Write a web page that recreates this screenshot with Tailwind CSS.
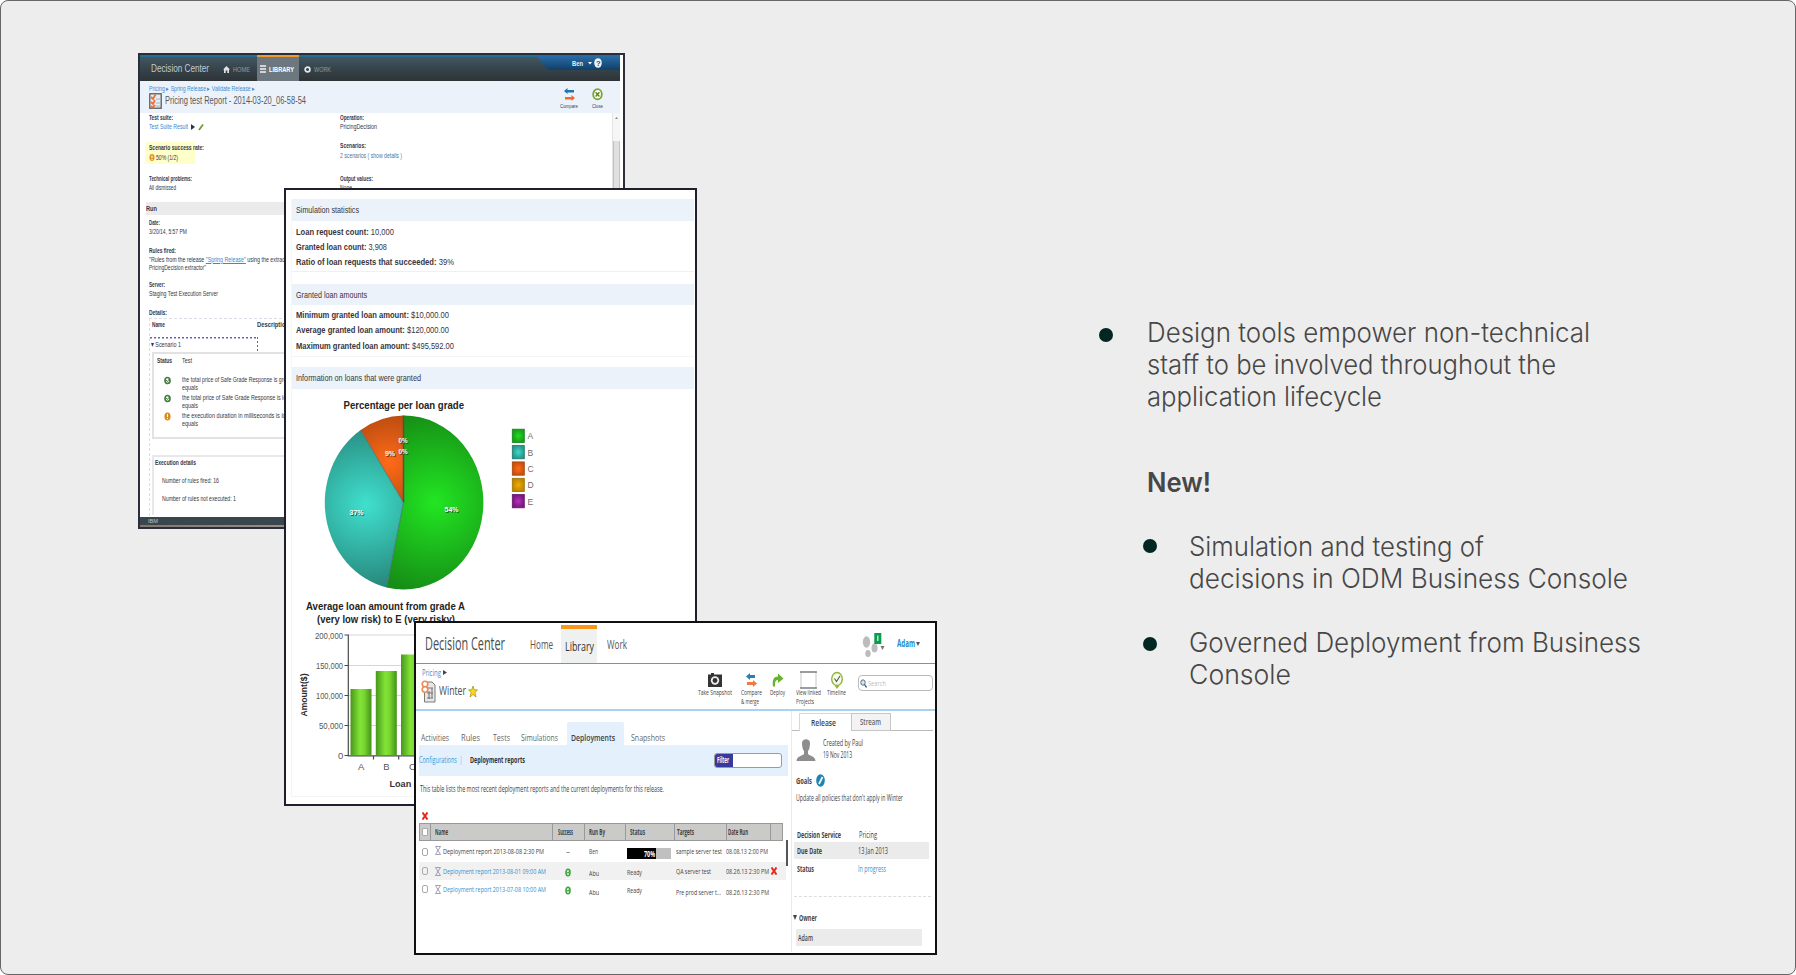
<!DOCTYPE html>
<html lang="en">
<head>
<meta charset="utf-8">
<title>Decision Center overview</title>
<script src="https://cdn.jsdelivr.net/npm/@tailwindcss/browser@4"></script>
</head>
<body class="bg-white leading-none [&_[data-w]]:inline-block [&_[data-w]]:shrink-0 [&_[data-w]]:origin-left [&_[data-w]]:whitespace-nowrap [&_svg]:shrink-0">
<main class="relative h-[975px] w-[1796px] overflow-hidden rounded-[8px] border border-[#666] bg-[#ededed]">

<!-- Test report window -->
<section class="absolute left-[137px] top-[52px] h-[476px] w-[487px] overflow-hidden border-2 border-[#2b2d3a] bg-white font-['Liberation_Sans',sans-serif] text-[7.5px] text-[#333848]">
  <header class="flex h-[26px] w-[480px] border-t-2 border-[#1f7095] bg-linear-to-b from-[#43565f] via-[#35444c] to-[#2e3336] text-[#d5dadd]">
    <div class="flex w-[117px] items-center pl-[11px] text-[10px] text-[#c3cacd]"><span data-w="58">Decision Center</span>
      <svg class="ml-[14px]" width="7" height="7" viewBox="0 0 7 7"><path d="M0 3.6 3.5 0 7 3.6H6V7H4.3V4.6H2.7V7H1V3.6Z" fill="#dde2e4"/></svg>
      <span class="ml-[3px] text-[7px] text-[#929aa5]" data-w="17">HOME</span></div>
    <div class="-mt-[2px] flex h-[26px] w-[42px] items-center border-t-2 border-[#ee9a2e] bg-[#6d7780] pl-[3px] text-[7px] font-bold text-white">
      <svg width="6" height="8" viewBox="0 0 6 8"><path d="M0 1H6M0 4H6M0 7H6" stroke="#f4f4f4" stroke-width="1.3"/></svg>
      <span class="ml-[3px]" data-w="25">LIBRARY</span></div>
    <div class="flex w-[227px] items-center pl-[5px] text-[7px] text-[#8f999e]">
      <svg width="7" height="7" viewBox="0 0 7 7"><circle cx="3.5" cy="3.5" r="2.4" fill="none" stroke="#e4e7e8" stroke-width="1.7"/></svg>
      <span class="ml-[3px]" data-w="17">WORK</span></div>
    <svg class="ml-auto -mt-[1px]" width="84" height="15" viewBox="0 0 84 15"><defs><linearGradient id="ban" x2="0" y2="1"><stop stop-color="#2a6ca6"/><stop offset="1" stop-color="#103f68"/></linearGradient></defs><path d="M0 0H84V14H14Q9 12 6 7T0 0Z" fill="url(#ban)"/><text x="36" y="10" font-size="8" font-weight="bold" fill="#e8f0f8" textLength="11" lengthAdjust="spacingAndGlyphs">Ben</text><path d="M52 6h4l-2 2.5z" fill="#fff"/><ellipse cx="62" cy="7" rx="3.8" ry="4.8" fill="#eef3f7"/><text x="60" y="10" font-size="7.5" font-weight="bold" fill="#224c70">?</text></svg>
  </header>

  <div class="flex h-[32px] w-[480px] justify-between bg-[#ecf2fa] pl-[9px]">
    <div class="pt-[3px]">
      <div class="flex h-[8px] items-center text-[7px] text-[#4289cf]"><span data-w="106">Pricing ▸ Spring Release ▸ Validate Release ▸</span></div>
      <div class="flex h-[18px] items-center text-[10px] text-[#555a61]">
        <svg width="13" height="16" viewBox="0 0 13 16"><rect x=".8" y=".8" width="11.4" height="14.4" fill="#e5eef5" stroke="#545a60" stroke-width="1.3"/><path d="M2 4 4 6 6.5 1.5M2 9 4 11 6 7M2 13 4 14.5 6 12" fill="none" stroke="#ee7038" stroke-width="1.8"/><path d="M7 6h4M7 10h4M7 13h4" stroke="#a0b6c4"/></svg>
        <span class="ml-[3px]" data-w="141">Pricing test Report - 2014-03-20_06-58-54</span></div>
    </div>
    <div class="mr-[17px] flex gap-[14px] pt-[7px] text-[6px] text-[#3a4258]">
      <div class="flex flex-col items-center gap-[2px]"><svg width="11" height="13" viewBox="0 0 11 13"><path d="M0 3 3.500 0V2H10V4.500H3.500V6Z" fill="#1d78ab"/><path d="M11 10 7.500 7V9H1V11.500H7.500V13Z" fill="#ee6a35"/></svg><span data-w="18">Compare</span></div>
      <div class="flex flex-col items-center gap-[2px]"><svg width="11" height="13" viewBox="0 0 11 13"><ellipse cx="5.500" cy="6.200" rx="4.300" ry="5.100" fill="#fff" stroke="#7ba234" stroke-width="1.800"/><path d="M3.600 4.200 7.400 8.400M7.400 4.200 3.600 8.400" stroke="#5a8b24" stroke-width="1.500"/></svg><span data-w="11">Close</span></div>
    </div>
  </div>

  <div class="flex h-[404px] w-[480px]">
    <div class="w-[472px]">
      <div class="grid grid-cols-[195px_277px]">
        <div class="pl-[5px]">
          <div class="flex h-[10px] items-center pl-[4px] font-bold"><span data-w="24">Test suite:</span></div>
          <div class="flex h-[8px] items-center pl-[4px] text-[#3f86cc]"><span data-w="39">Test Suite Result</span><svg class="ml-[2px]" width="15" height="8" viewBox="0 0 15 8"><path d="M1 1 5 4 1 7z" fill="#26384d"/><path d="M9 7 13 1.500" stroke="#6c9e38" stroke-width="1.800"/></svg></div>
          <div class="mt-[11px] h-[22px] w-[50px] bg-[#ffffc9] pl-[4px]">
            <div class="flex h-[11px] items-center font-bold"><span data-w="55">Scenario success rate:</span></div>
            <div class="flex h-[9px] items-center"><svg width="6" height="7" viewBox="0 0 6 7"><ellipse cx="3" cy="3.500" rx="2.600" ry="3.400" fill="#dd962b"/><path d="M3 1.500V4M3 5V6" stroke="#fff"/></svg><span class="ml-[1px]" data-w="22">50% (1/2)</span></div>
          </div>
          <div class="mt-[10px] flex h-[9px] items-center pl-[4px] font-bold"><span data-w="43">Technical problems:</span></div>
          <div class="flex h-[9px] items-center pl-[4px]"><span data-w="27">All dismissed</span></div>
        </div>
        <div class="pl-[5px]">
          <div class="flex h-[10px] items-center font-bold"><span data-w="24">Operation:</span></div>
          <div class="flex h-[8px] items-center"><span data-w="37">PricingDecision</span></div>
          <div class="mt-[10px] flex h-[10px] items-center font-bold"><span data-w="26">Scenarios:</span></div>
          <div class="flex h-[9px] items-center text-[#4678a8]"><span data-w="62">2 scenarios ( show details )</span></div>
          <div class="mt-[14px] flex h-[9px] items-center font-bold"><span data-w="33">Output values:</span></div>
          <div class="flex h-[9px] items-center"><span data-w="12">None</span></div>
        </div>
      </div>
      <div class="ml-[6px] mt-[10px] flex h-[13px] items-center bg-[#ebebeb] font-bold"><span data-w="11">Run</span></div>
      <div class="pl-[9px]">
        <div class="mt-[3px] flex h-[10px] items-center font-bold"><span data-w="11">Date:</span></div>
        <div class="flex h-[8px] items-center"><span data-w="38">3/20/14, 5:57 PM</span></div>
        <div class="mt-[10px] flex h-[9px] items-center font-bold"><span data-w="27">Rules fired:</span></div>
        <div class="flex h-[9px] items-center"><span data-w="142">"Rules from the release <u class="text-[#3f86cc]">"Spring Release"</u> using the extractor</span></div>
        <div class="flex h-[7px] items-center"><span data-w="57">PricingDecision extractor"</span></div>
        <div class="mt-[9px] flex h-[10px] items-center font-bold"><span data-w="16">Server:</span></div>
        <div class="flex h-[8px] items-center"><span data-w="69">Staging Test Execution Server</span></div>
        <div class="mt-[10px] flex h-[10px] items-center font-bold"><span data-w="18">Details:</span></div>
        <div class="h-[198px] border-l border-t border-dashed border-[#dcdce8]">
          <div class="flex h-[12px] items-center font-bold"><span class="ml-[2px]" data-w="13">Name</span><span class="ml-[92px]" data-w="32">Description</span></div>
          <div class="mt-[6px] flex h-[15px] w-[108px] items-center pl-[1px] [background-image:repeating-linear-gradient(90deg,#655bc4_0_2px,#fff0_2px_4px),repeating-linear-gradient(#655bc4_0_2px,#fff0_2px_4px)] [background-position:0_0,100%_0] [background-repeat:no-repeat] [background-size:100%_1.5px,1.5px_100%]"><span data-w="30">▾ Scenario 1</span></div>
          <div class="ml-[2px] h-[87px] border-2 border-r-0 border-[#e2e2e2] pl-[3px]">
            <div class="flex h-[14px] items-center"><span class="font-bold" data-w="15">Status</span><span class="ml-[10px]" data-w="10">Test</span></div>
            <div class="mt-[8px] flex h-[18px] gap-[11px] pl-[7px]"><svg width="7" height="9" viewBox="0 0 7 9"><ellipse cx="3.500" cy="4.500" rx="2.500" ry="3" fill="#fff" stroke="#487b42" stroke-width="1.700"/><path d="M2 4 3.500 5.500 6 2" fill="none" stroke="#487b42"/></svg><div class="flex flex-col"><span data-w="125">the total price of Safe Grade Response is greater than</span><span data-w="16">equals</span></div></div>
            <div class="flex h-[18px] gap-[11px] pl-[7px]"><svg width="7" height="9" viewBox="0 0 7 9"><ellipse cx="3.500" cy="4.500" rx="2.500" ry="3" fill="#fff" stroke="#487b42" stroke-width="1.700"/><path d="M2 4 3.500 5.500 6 2" fill="none" stroke="#487b42"/></svg><div class="flex flex-col"><span data-w="125">the total price of Safe Grade Response is lower than</span><span data-w="16">equals</span></div></div>
            <div class="flex h-[18px] gap-[11px] pl-[7px]"><svg width="7" height="9" viewBox="0 0 7 9"><ellipse cx="3.500" cy="4.500" rx="3.100" ry="3.900" fill="#d78c24"/><path d="M3.500 2V5M3.500 6V7" stroke="#fff"/></svg><div class="flex flex-col"><span data-w="125">the execution duration in milliseconds is lower than</span><span data-w="16">equals</span></div></div>
          </div>
          <div class="ml-[2px] mt-[16px] h-[60px] border-l-2 border-t-2 border-[#e8e8e8] pl-[1px]">
            <div class="flex h-[12px] items-center font-bold"><span data-w="41">Execution details</span></div>
            <div class="mt-[7px] flex h-[10px] items-center pl-[7px]"><span data-w="57">Number of rules fired: 16</span></div>
            <div class="mt-[8px] flex h-[10px] items-center pl-[7px]"><span data-w="74">Number of rules not executed: 1</span></div>
          </div>
        </div>
      </div>
    </div>
    <div class="w-[8px] border-l border-[#e4e4e4] bg-[#f6f6f6] pt-[3px]">
      <svg width="7" height="4" viewBox="0 0 7 4"><path d="M2 3 3.500 1 5 3z" fill="#888"/></svg>
      <div class="mt-[21px] h-[300px] border-x border-[#c2c2c2] bg-[#e0e0e0]"></div>
    </div>
  </div>
  <footer class="flex h-[8px] items-center bg-[#3a464d] pl-[8px] text-[6px] text-[#b9c3c8]"><span data-w="10">IBM</span></footer>
  <div class="h-[3px] bg-linear-to-r from-[#817770] to-[#c6c8c9]"></div>
</section>

<!-- Simulation report window -->
<section class="absolute left-[283px] top-[187px] h-[618px] w-[413px] overflow-hidden border-2 border-[#1e1f2f] bg-white font-['Liberation_Sans',sans-serif] text-[9.5px] text-[#38343d]">
  <div class="ml-[5px] mt-[9px] w-[403px] border-l border-[#f5f7fa]">
    <div class="flex h-[22px] items-center bg-[#ecf2f9] pl-[4px]"><span data-w="63">Simulation statistics</span></div>
    <div class="h-[51px] border-b border-[#ecf1f5] pl-[4px] pt-[3px]">
      <div class="flex h-[15px] items-center"><span data-w="98"><b>Loan request count:</b> 10,000</span></div>
      <div class="flex h-[15px] items-center"><span data-w="91"><b>Granted loan count:</b> 3,908</span></div>
      <div class="flex h-[15px] items-center"><span data-w="158"><b>Ratio of loan requests that succeeded:</b> 39%</span></div>
    </div>
    <div class="mt-[12px] flex h-[21px] items-center bg-[#ecf2f9] pl-[4px]"><span data-w="71">Granted loan amounts</span></div>
    <div class="h-[52px] border-b border-[#f2f5f8] pl-[4px] pt-[2px]">
      <div class="flex h-[15px] items-center"><span data-w="153"><b>Minimum granted loan amount:</b> $10,000.00</span></div>
      <div class="flex h-[16px] items-center"><span data-w="153"><b>Average granted loan amount:</b> $120,000.00</span></div>
      <div class="flex h-[15px] items-center"><span data-w="158"><b>Maximum granted loan amount:</b> $495,592.00</span></div>
    </div>
    <div class="mt-[10px] flex h-[22px] items-center bg-[#ecf2f9] pl-[4px]"><span data-w="125">Information on loans that were granted</span></div>
  </div>
  <!-- Charts: viewBox starts at the lower edge of the last section bar -->
  <svg width="409" height="415" viewBox="286 389.500 409 415" font-family="Liberation Sans, sans-serif">
    <defs>
      <radialGradient id="ga" gradientUnits="userSpaceOnUse" cx="435" cy="503" r="92"><stop stop-color="#22e622"/><stop offset="1" stop-color="#168d16"/></radialGradient>
      <radialGradient id="gb" gradientUnits="userSpaceOnUse" cx="366" cy="505" r="88"><stop stop-color="#40e0ce"/><stop offset="1" stop-color="#268378"/></radialGradient>
      <radialGradient id="gc" gradientUnits="userSpaceOnUse" cx="389" cy="463" r="52"><stop stop-color="#ff6a18"/><stop offset="1" stop-color="#b64a10"/></radialGradient>
      <linearGradient id="bar"><stop stop-color="#48961c"/><stop offset=".45" stop-color="#83e436"/><stop offset=".65" stop-color="#78d730"/><stop offset="1" stop-color="#45901b"/></linearGradient>
      <radialGradient id="l1"><stop stop-color="#25dc25"/><stop offset="1" stop-color="#179f17"/></radialGradient>
      <radialGradient id="l2"><stop stop-color="#3fd9c8"/><stop offset="1" stop-color="#27988c"/></radialGradient>
      <radialGradient id="l3"><stop stop-color="#ff6c18"/><stop offset="1" stop-color="#c7500e"/></radialGradient>
      <radialGradient id="l4"><stop stop-color="#f3ac00"/><stop offset="1" stop-color="#be8600"/></radialGradient>
      <radialGradient id="l5"><stop stop-color="#b92fc0"/><stop offset="1" stop-color="#77197d"/></radialGradient>
    </defs>
    <path d="M291.500 389V797H694" fill="none" stroke="#f4f4f4"/>
    <g font-size="11.500" font-weight="bold" fill="#242424">
      <text x="343.500" y="409.500" textLength="120.500" lengthAdjust="spacingAndGlyphs">Percentage per loan grade</text>
      <text x="306" y="610" textLength="159" lengthAdjust="spacingAndGlyphs">Average loan amount from grade A</text>
      <text x="317" y="623" textLength="138" lengthAdjust="spacingAndGlyphs">(very low risk) to E (very risky)</text>
    </g>
    <path d="M403.500 503V416A79.700 87 0 1 1 386.700 588Z" fill="url(#ga)"/>
    <path d="M403.500 503 386.700 588A79.700 87 0 0 1 360.700 430.500Z" fill="url(#gb)"/>
    <path d="M403.500 503 360.700 430.500A79.700 87 0 0 1 403.500 416Z" fill="url(#gc)"/>
    <path d="M360.700 430.500 403.500 503 386.700 588" fill="none" stroke="#45645c" stroke-width=".7"/><path d="M403.500 416V503" stroke="#485a38" stroke-width="1.500"/>
    <g font-size="8" font-weight="bold">
      <g fill="#222" opacity=".7"><text x="445.500" y="513" textLength="14" lengthAdjust="spacingAndGlyphs">54%</text><text x="350.500" y="516" textLength="14" lengthAdjust="spacingAndGlyphs">37%</text><text x="386" y="457" textLength="10" lengthAdjust="spacingAndGlyphs">9%</text><text x="399.500" y="444" textLength="9" lengthAdjust="spacingAndGlyphs">0%</text><text x="399.500" y="455.500" textLength="9" lengthAdjust="spacingAndGlyphs">0%</text></g>
      <g fill="#fff"><text x="444.500" y="512" textLength="14" lengthAdjust="spacingAndGlyphs">54%</text><text x="349.500" y="515" textLength="14" lengthAdjust="spacingAndGlyphs">37%</text><text x="385" y="456" textLength="10" lengthAdjust="spacingAndGlyphs">9%</text><text x="398.500" y="443" textLength="9" lengthAdjust="spacingAndGlyphs">0%</text><text x="398.500" y="454.500" textLength="9" lengthAdjust="spacingAndGlyphs">0%</text></g>
    </g>
    <g stroke-width=".8"><rect x="512.300" y="429.700" width="12" height="13.300" fill="url(#l1)" stroke="#178317"/><rect x="512.300" y="446" width="12" height="13.300" fill="url(#l2)" stroke="#1f756c"/><rect x="512.300" y="462.400" width="12" height="13.300" fill="url(#l3)" stroke="#a7430b"/><rect x="512.300" y="478.800" width="12" height="13.300" fill="url(#l4)" stroke="#9c7208"/><rect x="512.300" y="495" width="12" height="13.300" fill="url(#l5)" stroke="#651769"/></g>
    <g font-size="8.500" fill="#6d6d6d"><text x="527.500" y="439.500">A</text><text x="527.500" y="456">B</text><text x="527.500" y="472.300">C</text><text x="527.500" y="488.600">D</text><text x="527.500" y="505">E</text></g>
    <path d="M348 635.500H415M348 666H415M348 696H415M348 726H415" stroke="#d6d6d6"/>
    <rect x="350.500" y="689.500" width="21" height="66" fill="url(#bar)"/><rect x="375.800" y="671.500" width="21" height="84" fill="url(#bar)"/><rect x="401" y="655" width="21" height="100.500" fill="url(#bar)"/>
    <path d="M348.300 635V756.300H416M344.500 635.500H348M344.500 666H348M344.500 696H348M344.500 726H348M344.500 756H348M373.500 756V760M398.700 756V760" fill="none" stroke="#4a4a4a" stroke-width="1.200"/>
    <g font-size="9.500" fill="#555"><text x="315" y="639" textLength="28" lengthAdjust="spacingAndGlyphs">200,000</text><text x="316" y="669.300" textLength="27" lengthAdjust="spacingAndGlyphs">150,000</text><text x="316" y="699.300" textLength="27" lengthAdjust="spacingAndGlyphs">100,000</text><text x="319" y="729.300" textLength="24" lengthAdjust="spacingAndGlyphs">50,000</text><text x="338" y="759.500">0</text><text x="358" y="770.500">A</text><text x="383.300" y="770.500">B</text><text x="409" y="770.500">C</text></g>
    <text x="389.500" y="787" font-size="9.500" font-weight="bold" fill="#333" textLength="49" lengthAdjust="spacingAndGlyphs">Loan grade</text>
    <text transform="translate(306.500 717)rotate(-90)" font-size="9.500" font-weight="bold" fill="#2b2b2b" textLength="43" lengthAdjust="spacingAndGlyphs">Amount($)</text>
  </svg>
</section>

<!-- Release window -->
<section class="absolute left-[413px] top-[620px] h-[334px] w-[523px] overflow-hidden border-2 border-[#101010] bg-white font-['Open_Sans',sans-serif] text-[9px] text-[#444]">
  <header class="flex h-[41px] items-center border-b border-[#8e8e8e] pl-[9px] text-[13px] text-[#555]">
    <span class="text-[18px] text-[#4b4b4b]" data-w="80">Decision Center</span>
    <span class="ml-[25px] mt-[3px]" data-w="23">Home</span>
    <div class="ml-[8px] flex h-[38px] w-[36px] items-center self-end border-t-4 border-[#f7981d] bg-[#eff0f0] pl-[4px] text-[#333]"><span data-w="29">Library</span></div>
    <span class="ml-[10px] mt-[3px]" data-w="20">Work</span>
    <svg class="ml-[235px] mt-[1px]" width="26" height="27" viewBox="0 0 26 27"><g fill="#bcbcbc"><ellipse cx="4.500" cy="12" rx="3.700" ry="5.700"/><ellipse cx="6" cy="23.500" rx="2.700" ry="3.500"/><ellipse cx="12.500" cy="18" rx="3" ry="4.500"/></g><rect x="12.300" y="3" width="7" height="11" fill="#0b9b50"/><path d="M15.800 5.500V11" stroke="#c5efd6" stroke-width="1.400"/><path d="M18.500 16h4l-2 4z" fill="#777"/></svg>
    <span class="ml-[9px] text-[10.5px] font-bold text-[#2788c6]" data-w="18">Adam</span><svg class="ml-[1px]" width="4" height="5" viewBox="0 0 4 5"><path d="M0 1h4L2 5z" fill="#555"/></svg>
  </header>

  <div class="flex h-[47px] border-b-2 border-[#a9d2ee]">
    <div class="w-[282px] pl-[5px] pt-[3px]">
      <div class="flex h-[11px] items-center pl-[1px] text-[#3593d3]"><span data-w="19">Pricing</span><svg class="ml-[2px]" width="4" height="5" viewBox="0 0 4 5"><path d="M0 0 4 2.500 0 5z" fill="#444"/></svg></div>
      <div class="flex h-[26px] items-center text-[12.5px] text-[#4b4b4b]">
        <svg width="15" height="23" viewBox="0 0 15 23"><path d="M3.500 2H11L14 5V22H3.500Z" fill="#e7e7e7" stroke="#7a7a7a"/><path d="M6 8H12M6 13H12M6 18H12M8 11V19M11 8V18" stroke="#777" stroke-width="1.100"/><circle cx="4" cy="4" r="2.800" fill="#fff" stroke="#ef8b53" stroke-width="1.600"/><circle cx="4" cy="9.500" r="2.800" fill="#fff" stroke="#ef8b53" stroke-width="1.600"/></svg>
        <span class="ml-[3px]" data-w="27">Winter</span>
        <svg class="ml-[2px]" width="10" height="13" viewBox="0 0 10 13"><path d="M5 1 6.300 4.800H9.500L7 7.500 8 12 5 9.500 2 12 3 7.500.5 4.800H3.700Z" fill="#f8d915" stroke="#a08c1c" stroke-width=".7"/></svg>
      </div>
    </div>
    <div class="flex pt-[7px] text-[7.5px] text-[#444]">
      <div class="flex w-[34px] flex-col items-center"><svg class="h-[18px]" width="16" height="16" viewBox="0 0 16 16"><path d="M1 2.500H4V1H7V2.500H15V15H1Z" fill="#343434"/><circle cx="8" cy="8.500" r="4.200" fill="#eee"/><circle cx="8" cy="8.500" r="2.400" fill="#343434"/></svg><span class="h-[9px]" data-w="34">Take Snapshot</span></div>
      <div class="ml-[9px] flex w-[21px] flex-col items-center"><svg class="h-[18px]" width="11" height="14" viewBox="0 0 11 14"><path d="M0 3.500 4 0V2H9V5H4V7Z" fill="#2980b5"/><path d="M11 10.500 7 7V9H1V12H7V14Z" fill="#f07b40"/></svg><span class="h-[9px]" data-w="21">Compare</span><span class="h-[9px]" data-w="18">&amp; merge</span></div>
      <div class="ml-[8px] flex w-[15px] flex-col items-center"><svg class="h-[18px]" width="12" height="15" viewBox="0 0 12 15"><path d="M1 14C0 7 2 4 6 4V1L11.500 6 6 10.500V7.500C3 7.500 3 10 3 14Z" fill="#67b32e"/></svg><span class="h-[9px]" data-w="15">Deploy</span></div>
      <div class="ml-[11px] flex w-[25px] flex-col items-center"><svg class="h-[18px]" width="17" height="18" viewBox="0 0 17 18"><rect x="1" y="1" width="15" height="16" fill="#fff" stroke="#bbb" stroke-width=".8"/><path d="M0 1H17M0 17H17" stroke="#555" stroke-width="1.100"/></svg><span class="h-[9px]" data-w="25">View linked</span><span class="h-[9px]" data-w="18">Projects</span></div>
      <div class="ml-[6px] flex w-[19px] flex-col items-center"><svg class="h-[18px]" width="14" height="18" viewBox="0 0 14 18"><ellipse cx="7" cy="8" rx="5.300" ry="6.500" fill="#f5fae9" stroke="#8fb640" stroke-width="1.400"/><path d="M4.500 14.500 7 18 9.500 14.500Z" fill="#8fb640"/><path d="M4.500 7.500 6.500 10.500 10 5" fill="none" stroke="#555" stroke-width="1.100"/></svg><span class="h-[9px]" data-w="19">Timeline</span></div>
      <div class="ml-[12px] mt-[4px] flex h-[16px] w-[75px] items-center rounded-[4px] border border-[#bbb] pl-[1px] text-[8px] text-[#bbb]"><svg width="7" height="9" viewBox="0 0 7 9"><ellipse cx="3" cy="3.500" rx="2.200" ry="2.700" fill="#d5e6ee" stroke="#527187"/><path d="M4.500 5.500 6.500 8.500" stroke="#34556e" stroke-width="1.300"/></svg><span class="ml-[1px]" data-w="18">Search</span></div>
    </div>
  </div>

  <div class="flex">
    <!-- Deployment list -->
    <div class="w-[375px] pl-[3px]">
      <nav class="flex h-[34px] items-end pl-[2px] text-[9.5px] text-[#666]">
        <span class="h-[12px]" data-w="28">Activities</span><span class="ml-[12px] h-[12px]" data-w="19">Rules</span><span class="ml-[13px] h-[12px]" data-w="17">Tests</span><span class="ml-[11px] h-[12px]" data-w="37">Simulations</span>
        <div class="ml-[9px] flex h-[23px] w-[57px] items-end rounded-t-[2px] bg-[#e4f0fb] pl-[4px] font-semibold text-[#3c4249]"><span class="h-[12px]" data-w="44">Deployments</span></div>
        <span class="ml-[7px] h-[12px]" data-w="34">Snapshots</span>
      </nav>
      <div class="flex h-[31px] w-[369px] items-center bg-[#e4f0fb] text-[8.5px]">
        <span class="text-[#3a98d6]" data-w="38">Configurations</span><span class="ml-[3px] text-[#3a98d6]" data-w="2">|</span><span class="ml-[8px] font-bold text-[#333]" data-w="55">Deployment reports</span>
        <div class="ml-[189px] flex h-[15px] w-[68px] overflow-hidden rounded-[3px] border border-[#9a9a9a] bg-white"><div class="flex w-[18px] items-center bg-[#363a9d] pl-[2px] font-bold text-white"><span data-w="12">Filter</span></div></div>
      </div>
      <div class="flex h-[27px] items-center pl-[1px] text-[8.5px]"><span data-w="244">This table lists the most recent deployment reports and the current deployments for this release.</span></div>
      <div class="mt-[7px] flex h-[12px] items-center pl-[3px]"><svg width="6" height="8" viewBox="0 0 6 8"><path d="M.5.5 5.500 7.500M5.500.5.500 7.500" stroke="#e7291c" stroke-width="2"/></svg></div>
      <div class="flex">
        <div class="w-[367px] text-[8px]">
          <div class="mt-px grid h-[18px] w-[364px] grid-cols-[11px_122px_32px_41px_49px_52px_44px_13px] items-center divide-x divide-[#999] border border-[#999] bg-[#cacac8] font-bold text-[#3f3f3f] [&>div]:flex [&>div]:h-full [&>div]:items-center [&>div]:pl-[4px]">
            <div class="!pl-[2px]"><div class="h-[8px] w-[6px] rounded-[1px] border border-[#aaa] bg-white"></div></div>
            <div><span data-w="13">Name</span></div><div class="!pl-[5px]"><span data-w="15">Success</span></div><div><span data-w="16">Run By</span></div><div><span data-w="15">Status</span></div><div class="!pl-[2px]"><span data-w="17">Targets</span></div><div class="!pl-px"><span data-w="20">Date Run</span></div><div></div>
          </div>
          <div class="grid h-[21px] grid-cols-[24px_109px_37px_38px_49px_50px_60px] items-center pb-[1px]">
            <div class="flex items-center gap-[7px] pl-[3px] pt-[2px]"><div class="h-[8px] w-[6px] rounded-[2px] border border-[#aaa]"></div><svg class="-mt-[4px]" width="6" height="9" viewBox="0 0 6 9"><path d="M.5.500H5.500L.5 8.500H5.500Z" fill="none" stroke="#8c88a0" stroke-width=".8"/></svg></div>
            <span data-w="101">Deployment report 2013-08-08 2:30 PM</span><span class="pl-[14px]">–</span><span data-w="9">Ben</span>
            <div class="mt-[5px] flex h-[11px] w-[44px] bg-[#c0c0c0]"><div class="flex w-[29px] items-center justify-end bg-black pr-[1px] font-bold text-white"><span data-w="11">70%</span></div></div>
            <span data-w="46">sample server test</span><span data-w="42">08.08.13 2:00 PM</span>
          </div>
          <div class="grid h-[18px] grid-cols-[24px_109px_37px_38px_49px_50px_60px] items-center bg-[#f1f1f1]">
            <div class="flex items-center gap-[7px] pl-[3px]"><div class="h-[8px] w-[6px] rounded-[2px] border border-[#aaa]"></div><svg width="6" height="9" viewBox="0 0 6 9"><path d="M.5.500H5.500L.5 8.500H5.500Z" fill="none" stroke="#8c88a0" stroke-width=".8"/></svg></div>
            <span class="text-[#3590cd]" data-w="103">Deployment report 2013-08-01 09:00 AM</span>
            <svg class="ml-[13px] mt-[3px]" width="6" height="9" viewBox="0 0 6 9"><ellipse cx="3" cy="4.500" rx="2" ry="3.300" fill="#fff" stroke="#3ba53c" stroke-width="1.600"/><path d="M2 4 3 5.500 5 2" fill="none" stroke="#3ba53c"/></svg>
            <span class="mt-[3px]" data-w="10">Abu</span><span class="mt-[2px]" data-w="15">Ready</span><span data-w="35">QA server test</span><div class="flex items-center"><span data-w="43">08.26.13 2:30 PM</span><svg class="ml-[2px]" width="6" height="8" viewBox="0 0 6 8"><path d="M.5.5 5.500 7.500M5.500.5.500 7.500" stroke="#e7291c" stroke-width="2"/></svg></div>
          </div>
          <div class="grid h-[18px] grid-cols-[24px_109px_37px_38px_49px_50px_60px] items-center">
            <div class="flex items-center gap-[7px] pl-[3px]"><div class="h-[8px] w-[6px] rounded-[2px] border border-[#aaa]"></div><svg width="6" height="9" viewBox="0 0 6 9"><path d="M.5.500H5.500L.5 8.500H5.500Z" fill="none" stroke="#8c88a0" stroke-width=".8"/></svg></div>
            <span class="text-[#3590cd]" data-w="103">Deployment report 2013-07-08 10:00 AM</span>
            <svg class="ml-[13px] mt-[3px]" width="6" height="9" viewBox="0 0 6 9"><ellipse cx="3" cy="4.500" rx="2" ry="3.300" fill="#fff" stroke="#3ba53c" stroke-width="1.600"/><path d="M2 4 3 5.500 5 2" fill="none" stroke="#3ba53c"/></svg>
            <span class="mt-[6px]" data-w="10">Abu</span><span class="mt-[2px]" data-w="15">Ready</span><span class="mt-[6px]" data-w="45">Pre prod server t...</span><span class="mt-[6px]" data-w="43">08.26.13 2:30 PM</span>
          </div>
        </div>
        <div class="mt-[18px] h-[26px] w-[2px] bg-[#555]"></div>
      </div>
    </div>

    <!-- Release details -->
    <aside class="h-[241px] w-[142px] border-l border-[#e9e9e9] pt-[2px] text-[8.5px]">
      <div class="flex h-[18px]">
        <div class="w-[7px] border-b border-[#bbb]"></div>
        <div class="flex w-[52px] items-center border-l border-t border-[#d8d8d8] pl-[11px] text-[9.5px] font-semibold"><span data-w="25">Release</span></div>
        <div class="flex w-[40px] items-center border border-[#c6c6c6] bg-[#f3f3f3] pl-[8px] text-[9.5px] font-semibold text-[#666]"><span data-w="21">Stream</span></div>
        <div class="grow border-b border-[#bbb]"></div>
      </div>
      <div class="flex pl-[4px] pt-[7px]">
        <svg width="20" height="24" viewBox="0 0 20 24"><path d="M6 5C6 0 14 0 14 5 14 9 13 12 12 13V16C14 18 19 18 19.500 23H.5C1 18 6 18 8 16V13C7 12 6 9 6 5Z" fill="#8d8d8d"/></svg>
        <div class="-mt-[1px] ml-[7px]"><div class="flex h-[12px] items-center"><span data-w="40">Created by Paul</span></div><div class="flex h-[12px] items-center"><span data-w="29">19 Nov 2013</span></div></div>
      </div>
      <div class="mt-[11px] flex h-[14px] items-center pl-[4px] font-bold"><span class="mt-[3px]" data-w="16">Goals</span><svg class="ml-[4px]" width="9" height="13" viewBox="0 0 9 13"><ellipse cx="4.500" cy="6.500" rx="4.300" ry="6.200" fill="#2184ae"/><path d="M3 10 6.500 3" stroke="#e6f5fb" stroke-width="1.800"/></svg></div>
      <div class="mt-[5px] flex h-[12px] items-center pl-[4px]"><span data-w="107">Update all policies that don't apply in Winter</span></div>
      <div class="mt-[25px] flex h-[13px] items-center pl-[5px]"><span class="font-bold" data-w="44">Decision Service</span><span class="ml-[18px]" data-w="18">Pricing</span></div>
      <div class="ml-[2px] flex h-[17px] w-[135px] items-center bg-[#ebebeb] pl-[3px]"><span class="mt-[2px] font-bold" data-w="25">Due Date</span><span class="ml-[36px] mt-[2px]" data-w="30">13 Jan 2013</span></div>
      <div class="mt-[3px] flex h-[14px] items-center pl-[5px]"><span class="font-bold" data-w="17">Status</span><span class="ml-[44px] text-[#3293d1]" data-w="28">In progress</span></div>
      <div class="ml-[2px] mt-[20px] w-[137px] border-t border-dashed border-[#ddd]"></div>
      <div class="mt-[15px] flex h-[13px] items-center pl-[1px] font-bold"><svg class="-mt-[3px]" width="4" height="5" viewBox="0 0 4 5"><path d="M0 0h4L2 5z" fill="#444"/></svg><span class="ml-[2px]" data-w="18">Owner</span></div>
      <div class="ml-[4px] mt-[4px] flex h-[17px] w-[126px] items-center bg-[#ebebeb] pl-[2px] font-semibold"><span class="mt-[2px]" data-w="15">Adam</span></div>
    </aside>
  </div>
</section>

<!-- Key messages -->
<article class="ml-[1098px] mt-[316px] font-['Inter','Liberation_Sans',sans-serif] text-[27px] font-light leading-[32px] text-[#474747]">
  <div class="flex"><span class="mt-[11px] size-[14px] rounded-full bg-[#022622]"></span>
    <p class="ml-[34px] flex flex-col"><span data-w="443">Design tools empower non-technical</span><span data-w="409">staff to be involved throughout the</span><span data-w="235">application lifecycle</span></p></div>
  <h2 class="ml-[48px] mt-[54px] font-semibold"><span data-w="64">New!</span></h2>
  <div class="ml-[44px] mt-[32px] flex"><span class="mt-[8px] size-[14px] rounded-full bg-[#022622]"></span>
    <p class="ml-[32px] flex flex-col"><span data-w="295">Simulation and testing of</span><span data-w="439">decisions in ODM Business Console</span></p></div>
  <div class="ml-[44px] mt-[32px] flex"><span class="mt-[10px] size-[14px] rounded-full bg-[#022622]"></span>
    <p class="ml-[32px] flex flex-col"><span data-w="452">Governed Deployment from Business</span><span data-w="102">Console</span></p></div>
</article>
</main>
<script>
// Condense or widen each label to the width given in data-w.
function fitLabels() {
  document.querySelectorAll('[data-w]').forEach(el => {
    const target = parseFloat(el.dataset.w);
    el.style.transform = 'none';
    el.style.width = 'max-content';
    if (getComputedStyle(el.parentElement).flexDirection === 'column') el.style.alignSelf = 'flex-start';
    const natural = el.getBoundingClientRect().width;
    el.style.width = target + 'px';
    el.style.transform = 'scaleX(' + target / natural + ')';
  });
}
fitLabels();
window.addEventListener('load', () => {
  fitLabels();
  document.fonts.ready.then(fitLabels);
  requestAnimationFrame(() => requestAnimationFrame(fitLabels));
});
</script>
</body>
</html>
